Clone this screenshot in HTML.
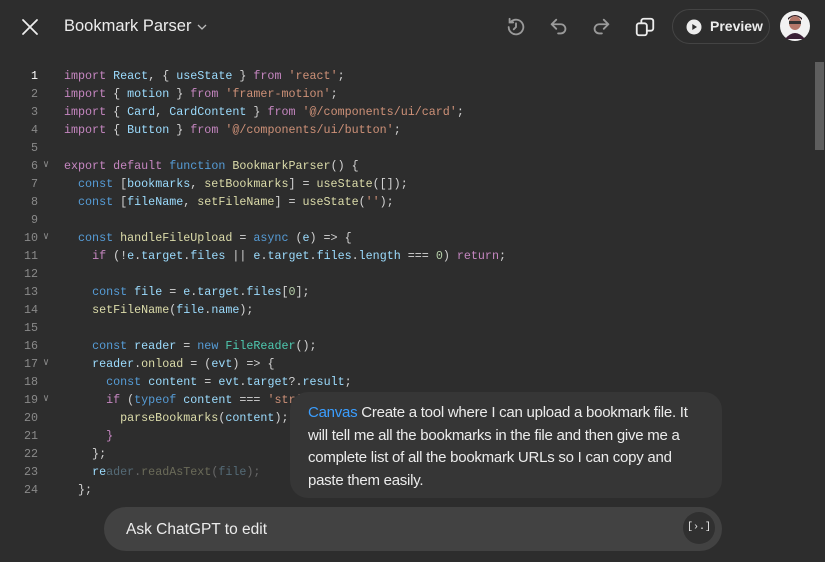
<!DOCTYPE html>
<html><head><meta charset="utf-8"><style>
*{margin:0;padding:0;box-sizing:border-box}
body{width:825px;height:562px;background:#2d2d2d;overflow:hidden;position:relative;font-family:"Liberation Sans",sans-serif;color:#ececec}
.code{position:absolute;left:0;top:67px;font-family:"Liberation Mono",monospace;font-size:11.7px;line-height:18px;white-space:pre;color:#d4d4d4}
.ln{position:absolute;left:0;width:38px;text-align:right;color:#8a8a8a}
.fold{position:absolute;left:43px;color:#8a8a8a;font-size:10px}
.tx{position:absolute;left:64px}
.k{color:#c586c0}.b{color:#569cd6}.v{color:#9cdcfe}.s{color:#ce9178}.f{color:#dcdcaa}.t{color:#4ec9b0}.n{color:#b5cea8}
.icon{position:absolute}
</style></head><body>
<svg class="icon" style="left:20px;top:17px" width="20" height="20" viewBox="0 0 20 20"><path d="M3 3L17 17M17 3L3 17" stroke="#ececec" stroke-width="1.8" stroke-linecap="round"/></svg>
<div style="position:absolute;left:64px;top:17px;font-size:16.5px;color:#ececec">Bookmark Parser</div>
<svg class="icon" style="left:196px;top:22px" width="12" height="10" viewBox="0 0 12 10"><path d="M2 3l4 4 4-4" stroke="#bbb" stroke-width="1.3" fill="none"/></svg>
<svg class="icon" style="left:505px;top:16px" width="22" height="22" viewBox="0 0 24 24" fill="none" stroke="#9a9a9a" stroke-width="2" stroke-linecap="round"><path d="M4 12a8 8 0 1 0 2.5-5.8"/><path d="M5 3v4h4"/><path d="M12 8v4l-2.5 2.5"/></svg>
<svg class="icon" style="left:548px;top:16px" width="22" height="22" viewBox="0 0 24 24" fill="none" stroke="#9a9a9a" stroke-width="2" stroke-linecap="round" stroke-linejoin="round"><path d="M9 4L4 9l5 5"/><path d="M4 9h10a5 5 0 0 1 0 10h-3"/></svg>
<svg class="icon" style="left:590px;top:16px" width="22" height="22" viewBox="0 0 24 24" fill="none" stroke="#9a9a9a" stroke-width="2" stroke-linecap="round" stroke-linejoin="round"><path d="M15 4l5 5-5 5"/><path d="M20 9H10a5 5 0 0 0 0 10h3"/></svg>
<svg class="icon" style="left:634px;top:16px" width="22" height="22" viewBox="0 0 24 24" fill="none" stroke="#ececec" stroke-width="2"><rect x="3" y="8" width="11" height="13" rx="2.5"/><path d="M8 8V5.5A2.5 2.5 0 0 1 10.5 3h8A2.5 2.5 0 0 1 21 5.5v8a2.5 2.5 0 0 1-2.5 2.5H14"/></svg>
<div style="position:absolute;left:672px;top:9px;width:98px;height:35px;border:1px solid #444;border-radius:18px"></div>
<svg class="icon" style="left:686px;top:19px" width="16" height="16" viewBox="0 0 16 16"><circle cx="8" cy="8" r="7.5" fill="#ececec"/><path d="M6.3 5v6l4.7-3z" fill="#2d2d2d"/></svg>
<div style="position:absolute;left:710px;top:18px;font-size:14px;font-weight:bold;color:#ececec">Preview</div>
<svg class="icon" style="left:780px;top:11px" width="30" height="30" viewBox="0 0 30 30"><circle cx="15" cy="15" r="15" fill="#f2f2f2"/><ellipse cx="15" cy="12" rx="6" ry="7" fill="#b5786a"/><path d="M8 9q7-8 14 0v-2q-7-6-14 0z" fill="#2a1a20"/><rect x="9" y="10" width="12" height="3" fill="#333"/><path d="M5 28q10-12 20 0z" fill="#3a1f35"/></svg>
<div style="position:absolute;left:815px;top:62px;width:9px;height:88px;background:#5e5e5e"></div>

<div class="code">
<div style="position:absolute;top:0"><span class="ln" style="color:#fff">1</span><span class="tx"><span class="k">import</span> <span class="v">React</span>, { <span class="v">useState</span> } <span class="k">from</span> <span class="s">'react'</span>;</span></div>
<div style="position:absolute;top:18px"><span class="ln">2</span><span class="tx"><span class="k">import</span> { <span class="v">motion</span> } <span class="k">from</span> <span class="s">'framer-motion'</span>;</span></div>
<div style="position:absolute;top:36px"><span class="ln">3</span><span class="tx"><span class="k">import</span> { <span class="v">Card</span>, <span class="v">CardContent</span> } <span class="k">from</span> <span class="s">'@/components/ui/card'</span>;</span></div>
<div style="position:absolute;top:54px"><span class="ln">4</span><span class="tx"><span class="k">import</span> { <span class="v">Button</span> } <span class="k">from</span> <span class="s">'@/components/ui/button'</span>;</span></div>
<div style="position:absolute;top:72px"><span class="ln">5</span></div>
<div style="position:absolute;top:90px"><span class="ln">6</span><span class="fold">&#x2228;</span><span class="tx"><span class="k">export</span> <span class="k">default</span> <span class="b">function</span> <span class="f">BookmarkParser</span>() {</span></div>
<div style="position:absolute;top:108px"><span class="ln">7</span><span class="tx">  <span class="b">const</span> [<span class="v">bookmarks</span>, <span class="f">setBookmarks</span>] = <span class="f">useState</span>([]);</span></div>
<div style="position:absolute;top:126px"><span class="ln">8</span><span class="tx">  <span class="b">const</span> [<span class="v">fileName</span>, <span class="f">setFileName</span>] = <span class="f">useState</span>(<span class="s">''</span>);</span></div>
<div style="position:absolute;top:144px"><span class="ln">9</span></div>
<div style="position:absolute;top:162px"><span class="ln">10</span><span class="fold">&#x2228;</span><span class="tx">  <span class="b">const</span> <span class="f">handleFileUpload</span> = <span class="b">async</span> (<span class="v">e</span>) =&gt; {</span></div>
<div style="position:absolute;top:180px"><span class="ln">11</span><span class="tx">    <span class="k">if</span> (!<span class="v">e</span>.<span class="v">target</span>.<span class="v">files</span> || <span class="v">e</span>.<span class="v">target</span>.<span class="v">files</span>.<span class="v">length</span> === <span class="n">0</span>) <span class="k">return</span>;</span></div>
<div style="position:absolute;top:198px"><span class="ln">12</span></div>
<div style="position:absolute;top:216px"><span class="ln">13</span><span class="tx">    <span class="b">const</span> <span class="v">file</span> = <span class="v">e</span>.<span class="v">target</span>.<span class="v">files</span>[<span class="n">0</span>];</span></div>
<div style="position:absolute;top:234px"><span class="ln">14</span><span class="tx">    <span class="f">setFileName</span>(<span class="v">file</span>.<span class="v">name</span>);</span></div>
<div style="position:absolute;top:252px"><span class="ln">15</span></div>
<div style="position:absolute;top:270px"><span class="ln">16</span><span class="tx">    <span class="b">const</span> <span class="v">reader</span> = <span class="b">new</span> <span class="t">FileReader</span>();</span></div>
<div style="position:absolute;top:288px"><span class="ln">17</span><span class="fold">&#x2228;</span><span class="tx">    <span class="v">reader</span>.<span class="f">onload</span> = (<span class="v">evt</span>) =&gt; {</span></div>
<div style="position:absolute;top:306px"><span class="ln">18</span><span class="tx">      <span class="b">const</span> <span class="v">content</span> = <span class="v">evt</span>.<span class="v">target</span>?.<span class="v">result</span>;</span></div>
<div style="position:absolute;top:324px"><span class="ln">19</span><span class="fold">&#x2228;</span><span class="tx">      <span class="k">if</span> (<span class="b">typeof</span> <span class="v">content</span> === <span class="s">'string'</span>) {</span></div>
<div style="position:absolute;top:342px"><span class="ln">20</span><span class="tx">        <span class="f">parseBookmarks</span>(<span class="v">content</span>);</span></div>
<div style="position:absolute;top:360px"><span class="ln">21</span><span class="tx" style="color:#c586c0">      }</span></div>
<div style="position:absolute;top:378px"><span class="ln">22</span><span class="tx">    };</span></div>
<div style="position:absolute;top:396px"><span class="ln">23</span><span class="tx">    <span class="v">re</span><span style="opacity:.35"><span class="v">ader</span>.<span class="f">readAsText</span>(<span class="v">file</span>);</span></span></div>
<div style="position:absolute;top:414px"><span class="ln">24</span><span class="tx">  };</span></div>
<div style="position:absolute;top:432px"><span class="ln">25</span></div>
</div>
<div style="position:absolute;left:0;top:502px;width:825px;height:60px;background:#2d2d2d"></div>
<div style="position:absolute;left:290px;top:392px;width:432px;height:106px;background:#363636;border-radius:18px;padding:10px 18px 0 18px;font-size:15px;line-height:22.7px;letter-spacing:-0.25px;color:#ececec">
<span style="color:#3b9eff">Canvas</span> Create a tool where I can upload a bookmark file. It will tell me all the bookmarks in the file and then give me a complete list of all the bookmark URLs so I can copy and paste them easily.</div>
<div style="position:absolute;left:104px;top:507px;width:618px;height:44px;background:#424242;border-radius:22px"></div>
<div style="position:absolute;left:126px;top:521px;font-size:15.5px;color:#ececec">Ask ChatGPT to edit</div>
<div style="position:absolute;left:683px;top:512px;width:32px;height:32px;border-radius:16px;background:#303030;color:#ececec;font-family:'Liberation Mono',monospace;font-size:10px;line-height:32px;text-align:center">[›.]</div>
</body></html>
